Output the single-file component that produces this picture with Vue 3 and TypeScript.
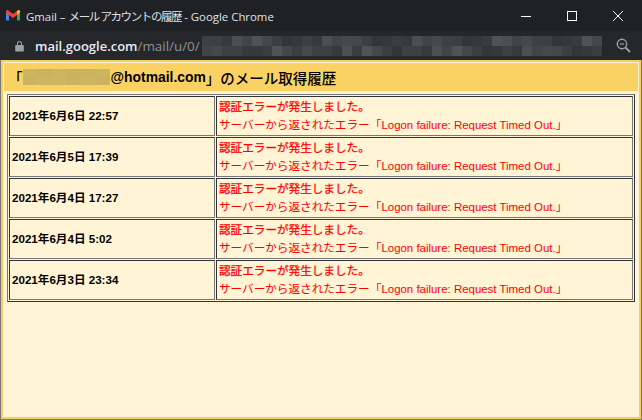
<script setup lang="ts">
const rows: string[] = ['2021年6月6日 22:57','2021年6月5日 17:39','2021年6月4日 17:27','2021年6月4日 5:02','2021年6月3日 23:34']
const shades = ['#3e4044','#3a3c40','#46484c','#36383c','#424448','#333539','#4c4e52','#3c3e42','#37393d','#44474c','#3e3f42','#505256']
const mosaic: string[] = Array.from({length:80},(_,i)=>shades[(i*7+(i%5)*3)%shades.length])
const mailTones = ['#cdb562','#d6bb63','#d0b763','#d9be64','#cbb260','#d4ba62','#cfb662','#dabf65']
const mail: string[] = Array.from({length:12},(_,i)=>mailTones[(i*3+i%4)%mailTones.length])
</script>

<template>
  <div class="win">
    <header class="title">
      <svg class="gm" viewBox="0 0 16 12" width="14" height="10.500">
        <path d="M0 2v9a1 1 0 0 0 1 1h2.400V5.200z" fill="#4285f4"/>
        <path d="M16 2v9a1 1 0 0 1-1 1h-2.400V5.200z" fill="#34a853"/>
        <path d="M3.400 5.800 0 3.200V1.600C0 .4 1.300-.4 2.400.4l1 .8L8 4.600l4.600-3.400v4.600L8 9.200z" fill="#ea4335"/>
        <path d="M12.600 1.200l1-.8C14.700-.4 16 .4 16 1.600v1.600l-3.400 2.600z" fill="#fbbc04"/>
      </svg>
      <span class="ttext">Gmail – <span class="tcjk">メール アカウントの履歴</span> - Google Chrome</span>
      <div class="ctrls">
        <svg width="12" height="12" viewBox="0 0 12 12"><path d="M1 6.500h10" stroke="#fff" fill="none"/></svg>
        <svg width="12" height="12" viewBox="0 0 12 12"><rect x="1.500" y="1.500" width="9" height="9" stroke="#fff" fill="none"/></svg>
        <svg width="12" height="12" viewBox="0 0 12 12"><path d="M1 1l10 10M11 1 1 11" stroke="#fff" fill="none"/></svg>
      </div>
    </header>
    <div class="addr">
      <svg class="lock" viewBox="0 0 10 12" width="9" height="12"><path d="M1 5h8a.8.8 0 0 1 .8.800v5.400a.8.800 0 0 1-.8.800H1a.800.800 0 0 1-.8-.800V5.800A.800.800 0 0 1 1 5zM2.200 5V3.200a2.800 2.800 0 0 1 5.600 0V5H6.700V3.200a1.700 1.700 0 0 0-3.400 0V5z" fill="#9aa0a6"/></svg>
      <span class="host">mail.google.com</span><span class="path">/mail/u/0/</span>
      <div class="mosaic"><i v-for="(c,i) in mosaic" :key="i" :style="{background:c}"></i></div>
      <svg class="zoom" width="15" height="15" viewBox="0 0 15 15"><circle cx="6" cy="6" r="4.700" stroke="#9aa0a6" stroke-width="1.400" fill="none"/><path d="M3.800 6h4.400" stroke="#9aa0a6" stroke-width="1.200"/><path d="M9.500 9.500 14 14" stroke="#9aa0a6" stroke-width="1.800"/></svg>
    </div>
    <div class="frame">
      <main class="page">
        <h1 class="head">「<span class="blur"><i v-for="(c,i) in mail" :key="i" :style="{background:c}"></i></span><span class="hot">@hotmail.com</span>」のメール取得履歴</h1>
        <table class="log">
          <tbody>
            <tr v-for="r in rows" :key="r">
              <td class="date">{{ r }}</td>
              <td class="msg"><span class="m1">認証エラーが発生しました。</span><br>サーバーから返されたエラー<span class="br">「</span><span class="lat">Logon failure: Request Timed Out.</span>」</td>
            </tr>
          </tbody>
        </table>
      </main>
    </div>
  </div>
</template>

<style>
html, body { margin: 0; background: #202124; }
</style>

<style scoped>
.win { width: 642px; height: 420px; display: flex; flex-direction: column; overflow: hidden; font-family: "Liberation Sans", "Noto Sans CJK JP", sans-serif; }
.title { height: 31px; background: #202124; display: flex; align-items: center; padding-left: 6px; box-sizing: border-box; flex: none; }
.gm { margin-right: 6px; }
.ttext { font: 11.400px "Open Sans", "Noto Sans CJK JP", sans-serif; color: #dfe1e5; white-space: nowrap; }
.tcjk { font-size: 11.500px; letter-spacing: -1.400px; }
.ctrls { margin-left: auto; display: flex; gap: 34px; padding-right: 18px; }
.addr { height: 29px; background: #26272b; display: flex; align-items: center; flex: none; box-sizing: border-box; padding-left: 15px; position: relative; }
.lock { margin-right: 11px; }
.host { font: 600 13px "Open Sans", sans-serif; color: #e8eaed; }
.path { font: 13.400px "Open Sans", sans-serif; color: #8f9296; }
.mosaic { width: 400px; height: 20px; margin-left: 2px; display: grid; grid-template-columns: repeat(40, 10px); grid-auto-rows: 10px; overflow: hidden; }
.zoom { position: absolute; right: 11px; top: 7px; }
.frame { flex: 1; display: flex; background: #f7cd60; border: 1px solid #777; border-top: none; box-sizing: border-box; padding: 2px; min-height: 0; }
.page { flex: 1; background: #fff5d6; padding: 1px 1px 0; box-sizing: border-box; min-width: 0; }
.head { margin: 0; height: 28px; background: #fad264; box-sizing: border-box; font-size: 14.500px; font-weight: 500; color: #000; display: flex; align-items: center; padding-left: 4px; white-space: nowrap; }
.blur { display: inline-grid; grid-template-columns: repeat(6, 14.500px); grid-auto-rows: 8px; width: 87px; height: 16px; overflow: hidden; }
.hot { font-size: 13.900px; font-weight: bold; margin-left: 1px; }
.log { margin: 3px 3px 0; width: 628px; table-layout: fixed; border-collapse: separate; border-spacing: 1px; border: 1px solid; border-color: #777 #333 #333 #777; box-sizing: border-box; }
.log td { border: 1px solid; border-color: #333 #777 #777 #333; padding: 1px 2px; height: 39.400px; box-sizing: border-box; font-size: 11.600px; line-height: 18px; white-space: nowrap; overflow: hidden; }
.date { width: 206px; font-weight: bold; color: #000; }
.msg { color: #f00; }
.m1 { -webkit-text-stroke: 0.25px #f00; }
.br { font-feature-settings: "halt"; margin-left: 6px; }
.lat { font-size: 11.450px; }
</style>
